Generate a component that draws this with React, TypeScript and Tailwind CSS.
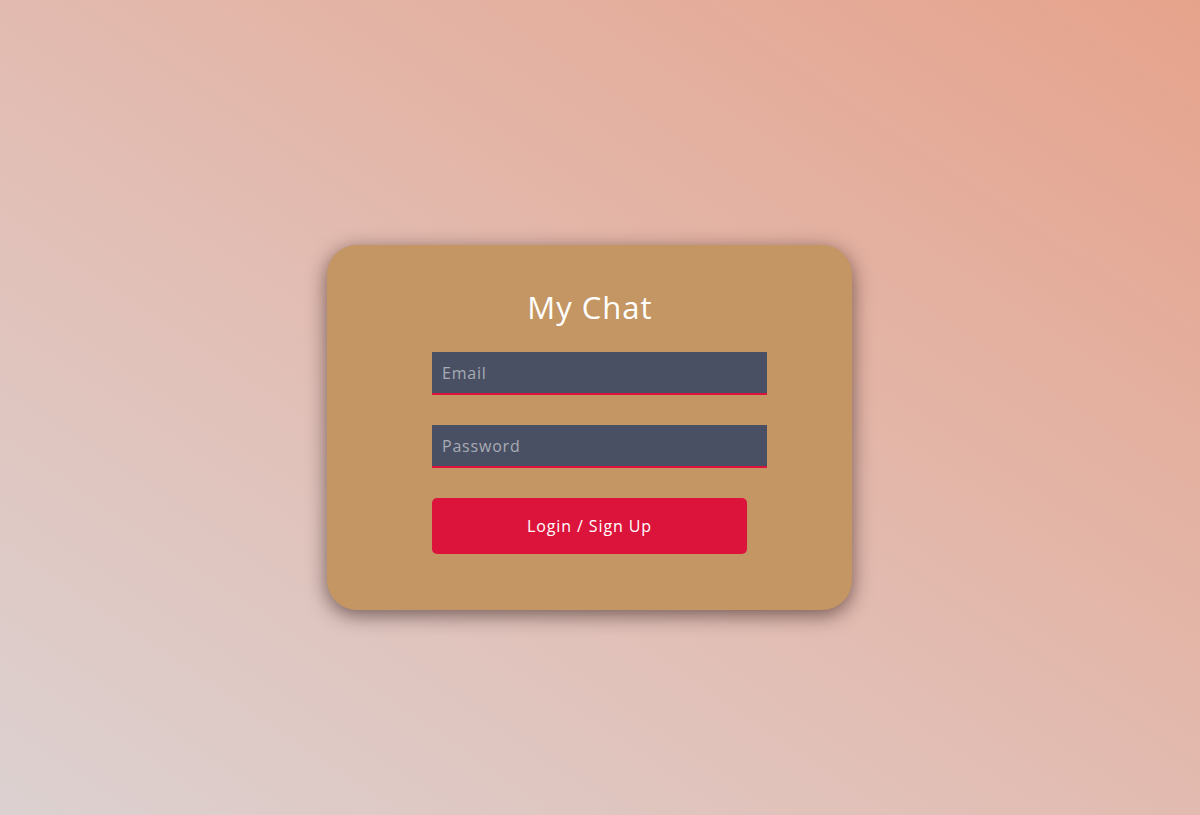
export default function App() {
  return (
    <div
      className="w-full h-[815px] flex items-center justify-center pt-[40px] pr-[21px] bg-[linear-gradient(to_top_right,#dcd1d1,#e2bdb3_45%,#e6a38c)]"
      style={{ fontFamily: "'Open Sans', 'Noto Sans', sans-serif" }}
    >
      <div className="w-[525px] h-[365px] rounded-[30px] bg-[#c49663] shadow-[0_5px_20px_rgba(40,20,20,0.6)] pt-[42px] flex flex-col items-center">
        <h1 className="text-[31px] leading-[40px] text-white font-normal pl-[1px] tracking-[1px]">My Chat</h1>
        <form className="w-[315px] mt-[25px] flex flex-col">
          <input
            type="text"
            placeholder="Email"
            className="box-content w-full h-[41px] px-[10px] bg-[#4a5064] border-b-2 border-[#dc143c] text-[16px] tracking-[0.8px] text-white placeholder:text-[#a7abb4] outline-none"
          />
          <input
            type="password"
            placeholder="Password"
            className="box-content w-full h-[41px] px-[10px] mt-[30px] bg-[#4a5064] border-b-2 border-[#dc143c] text-[16px] tracking-[0.8px] text-white placeholder:text-[#a7abb4] outline-none"
          />
          <button
            type="button"
            className="w-full h-[56px] mt-[30px] rounded-[5px] bg-[#dc143c] text-white text-[16px] font-medium tracking-[0.9px]"
          >
            Login / Sign Up
          </button>
        </form>
      </div>
    </div>
  );
}
